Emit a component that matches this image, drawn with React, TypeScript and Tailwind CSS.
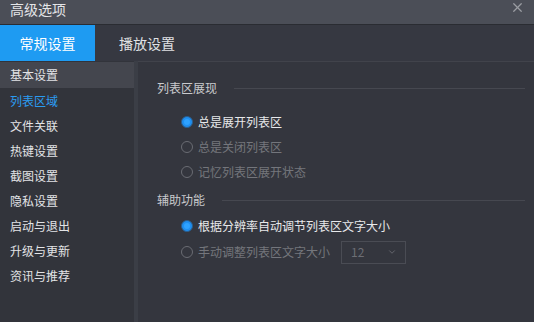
import { ChevronDown, X } from "lucide-react";

const SIDE_ITEMS = [
  "基本设置",
  "列表区域",
  "文件关联",
  "热键设置",
  "截图设置",
  "隐私设置",
  "启动与退出",
  "升级与更新",
  "资讯与推荐",
];

function Radio({ checked }: { checked?: boolean }) {
  return checked ? (
    <span className="flex h-[12px] w-[12px] shrink-0 items-center justify-center rounded-full border border-[#2a5d8c] bg-[#1f8ff0]">
      <span className="h-[6px] w-[6px] rounded-full bg-[#2ea2ff]" />
    </span>
  ) : (
    <span className="h-[12px] w-[12px] shrink-0 rounded-full border border-[#6a6c73]" />
  );
}

function SectionHeader({ title }: { title: string }) {
  return (
    <div className="flex h-[18px] items-center gap-[17px] pr-[9px]">
      <span className="text-[12px] text-[#c9cacd]">{title}</span>
      <div className="h-px flex-1 bg-[#464850]" />
    </div>
  );
}

export default function App() {
  const active = 1;

  return (
    <div
      className="flex h-[322px] w-[534px] flex-col overflow-hidden bg-[#34363e]"
      style={{ fontFamily: '"Noto Sans CJK SC", "Noto Sans", sans-serif' }}
    >
      {/* title bar */}
      <div className="flex h-[24px] shrink-0 items-center justify-between bg-[#4b4e57] pl-[10px] pr-[9px]">
        <span className="-mt-[6px] text-[14px] text-[#e4e5e8]">高级选项</span>
        <X size={15} strokeWidth={2} className="-mt-[9px] text-[#9a9ca2]" />
      </div>
      <div className="h-px shrink-0 bg-[#2a2c32]" />

      {/* tabs */}
      <div className="flex h-[36px] shrink-0 items-stretch bg-[#363841]">
        <div className="flex w-[95px] items-center justify-center bg-[#1e9bf2] text-[14px] text-white">
          常规设置
        </div>
        <div className="flex items-center pl-[24px] text-[14px] text-[#e0e1e4]">
          播放设置
        </div>
      </div>

      <div className="flex min-h-0 flex-1">
        {/* sidebar */}
        <div className="flex w-[134px] shrink-0 flex-col bg-[#32343b] pt-px">
          {SIDE_ITEMS.map((item, i) => (
            <div
              key={item}
              className={`flex items-center pl-[10px] text-[12px] ${
                i === 0 ? "h-[26px] bg-[#44464e]" : "h-[25px]"
              } ${i === active ? "text-[#2b9cf2]" : "text-[#e2e3e6]"}`}
            >
              {item}
            </div>
          ))}
        </div>
        <div className="w-[4px] shrink-0 bg-[#3b3e46]" />

        {/* content */}
        <div className="flex flex-1 flex-col border-t border-[#41434b] pl-[19px] pt-[17px]">
          <SectionHeader title="列表区展现" />
          <div className="mt-[12px] flex flex-col pl-[24px]">
            <div className="flex h-[25px] items-center gap-[5px] text-[12px] text-[#e8e9eb]">
              <Radio checked />
              总是展开列表区
            </div>
            <div className="flex h-[25px] items-center gap-[5px] text-[12px] text-[#74767c]">
              <Radio />
              总是关闭列表区
            </div>
            <div className="flex h-[25px] items-center gap-[5px] text-[12px] text-[#74767c]">
              <Radio />
              记忆列表区展开状态
            </div>
          </div>

          <div className="mt-[7px]">
            <SectionHeader title="辅助功能" />
          </div>
          <div className="mt-[4px] flex flex-col pl-[24px]">
            <div className="flex h-[26px] items-center gap-[5px] text-[12px] text-[#e8e9eb]">
              <Radio checked />
              根据分辨率自动调节列表区文字大小
            </div>
            <div className="flex h-[26px] items-center gap-[5px] text-[12px] text-[#74767c]">
              <Radio />
              手动调整列表区文字大小
              <div className="ml-[6px] flex h-[23px] w-[65px] items-center justify-between border border-[#4a4c54] pl-[9px] pr-[8px] text-[12px] text-[#6c6e75]">
                12
                <ChevronDown size={10} className="text-[#6c6e75]" />
              </div>
            </div>
          </div>
        </div>
      </div>
    </div>
  );
}
